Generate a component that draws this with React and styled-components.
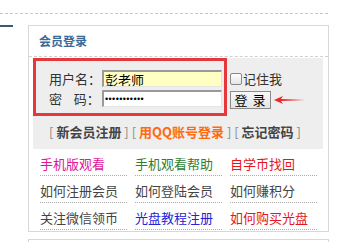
import styled, { createGlobalStyle } from "styled-components"

const GlobalStyle = createGlobalStyle`
body {
    margin: 0;
    background: #fff;
    font-family: "Noto Sans CJK SC", "Liberation Sans", sans-serif;
    font-size: 13px;
    color: #333;
    overflow: hidden;
}
`

const links = [
    { text: '手机版观看', color: '#e0149b' },
    { text: '手机观看帮助', color: '#2f7d2f' },
    { text: '自学币找回', color: '#e3161b' },
    { text: '如何注册会员', color: '#444' },
    { text: '如何登陆会员', color: '#444' },
    { text: '如何赚积分', color: '#444' },
    { text: '关注微信领币', color: '#444' },
    { text: '光盘教程注册', color: '#2424d6' },
    { text: '如何购买光盘', color: '#e3161b' },
]

export default function App() {
    return (
        <>
            <GlobalStyle />
            <TopRule />
            <Main>
                <SideBar />
                <Column>
                    <Box>
                        <Title>会员登录</Title>
                        <LoginArea>
                            <FormRow>
                                <RedFrame>
                                    <Field>
                                        <Label>用户名：</Label>
                                        <Input $bg="#ffffc4" defaultValue="彭老师" />
                                    </Field>
                                    <Field>
                                        <Label>密&nbsp;&nbsp;&nbsp;&nbsp;码：</Label>
                                        <Input $bg="#fff" type="password" $secret defaultValue="12345678901" />
                                    </Field>
                                </RedFrame>
                                <Side>
                                    <Remember>
                                        <Check type="checkbox" />
                                        记住我
                                    </Remember>
                                    <ButtonRow>
                                        <LoginButton>登 录</LoginButton>
                                        <svg width="33" height="10" viewBox="0 0 33 10">
                                            <path d="M1 5 L10 1 L8 4 L32 5 L8 6 L10 9 Z" fill="#ea2a2a" />
                                        </svg>
                                    </ButtonRow>
                                </Side>
                            </FormRow>
                            <Actions>
                                <Bracket>[</Bracket> <Action>新会员注册</Action> <Bracket>]</Bracket>{' '}
                                <Bracket>[</Bracket> <Action $qq>用QQ账号登录</Action> <Bracket>]</Bracket>{' '}
                                <Bracket>[</Bracket> <Action>忘记密码</Action> <Bracket>]</Bracket>
                            </Actions>
                        </LoginArea>
                        <LinkGrid>
                            {links.map((l) => (
                                <LinkCell key={l.text} $color={l.color}>{l.text}</LinkCell>
                            ))}
                        </LinkGrid>
                    </Box>
                    <NextBox />
                </Column>
            </Main>
        </>
    )
}

const TopRule = styled.div`
width: 328px;
margin-top: 13px;
border-top: 1px dashed #c8c8c8;
`

const Main = styled.div`
display: flex;
margin-top: 11px;
`

const SideBar = styled.div`
width: 13px;
border-top: 2px solid #3f5870;
`

const Column = styled.div`
margin-left: 15px;
display: flex;
flex-direction: column;
gap: 7px;
`

const Box = styled.div`
width: 299px;
height: 205px;
border: 1px solid #d8d8d8;
`

const NextBox = styled.div`
width: 299px;
height: 20px;
border: 1px solid #d8d8d8;
`

const Title = styled.div`
height: 30px;
line-height: 30px;
padding-left: 10px;
font-size: 12px;
font-weight: bold;
color: #3b6a96;
border-bottom: 1px dashed #d0d0d0;
`

const LoginArea = styled.div`
margin: 1px 5px 0 4px;
background: #eeeeee;
height: 91px;
`

const FormRow = styled.div`
display: flex;
align-items: flex-start;
`

const RedFrame = styled.div`
width: 194px;
height: 58px;
flex-shrink: 0;
border: 3px solid #e4383a;
padding: 9px 0 0 13px;
box-sizing: border-box;
display: flex;
flex-direction: column;
gap: 3px;
`

const Field = styled.div`
display: flex;
align-items: center;
`

const Label = styled.span`
width: 53px;
flex-shrink: 0;
font-size: 13px;
line-height: 17px;
color: #333;
white-space: nowrap;
`

const Input = styled.input`
width: 120px;
height: 17px;
flex-shrink: 0;
box-sizing: border-box;
padding: 0 1px;
margin: 0;
background: ${p => p.$bg};
border-top: 2px solid #9a9a9a;
border-left: 2px solid #9a9a9a;
border-right: 1px solid #e4e4e4;
border-bottom: 1px solid #e4e4e4;
font-family: ${p => p.$secret ? '"Liberation Sans", sans-serif' : '"Noto Sans CJK SC", "Liberation Sans", sans-serif'};
font-size: ${p => p.$secret ? '9px' : '13px'};
letter-spacing: ${p => p.$secret ? '0.4px' : '0'};
color: #000;
outline: none;
`

const Side = styled.div`
padding: 13px 0 0 3px;
display: flex;
flex-direction: column;
gap: 4px;
`

const Remember = styled.label`
display: flex;
align-items: center;
font-size: 13px;
color: #333;
line-height: 16px;
white-space: nowrap;
`

const Check = styled.input`
appearance: none;
width: 12px;
height: 12px;
margin: 0 1px 0 0;
border: 1px solid #888;
border-radius: 2px;
background: linear-gradient(#fdfdfd, #e6e6e6);
`

const ButtonRow = styled.div`
display: flex;
align-items: center;
gap: 2px;
`

const LoginButton = styled.button`
width: 41px;
height: 18px;
padding: 0;
border: 1px solid #8a8a8a;
background: linear-gradient(#f8f8f8, #e4e4e4);
font-family: "Noto Sans CJK SC", "Liberation Sans", sans-serif;
font-size: 13px;
line-height: 14px;
letter-spacing: 1px;
color: #000;
`

const Actions = styled.div`
text-align: center;
line-height: 32px;
font-size: 13px;
white-space: nowrap;
padding-right: 6px;
`

const Bracket = styled.span`
color: #8a8a8a;
`

const Action = styled.span`
font-weight: bold;
color: ${p => p.$qq ? '#ff6a10' : '#444'};
`

const LinkGrid = styled.div`
display: grid;
grid-template-columns: repeat(3, 87px);
column-gap: 8px;
margin-left: 11px;
`

const LinkCell = styled.div`
padding: 5px 0 2px;
line-height: 19px;
border-bottom: 1px dotted #aaa;
font-size: 13px;
color: ${p => p.$color};
white-space: nowrap;
`
